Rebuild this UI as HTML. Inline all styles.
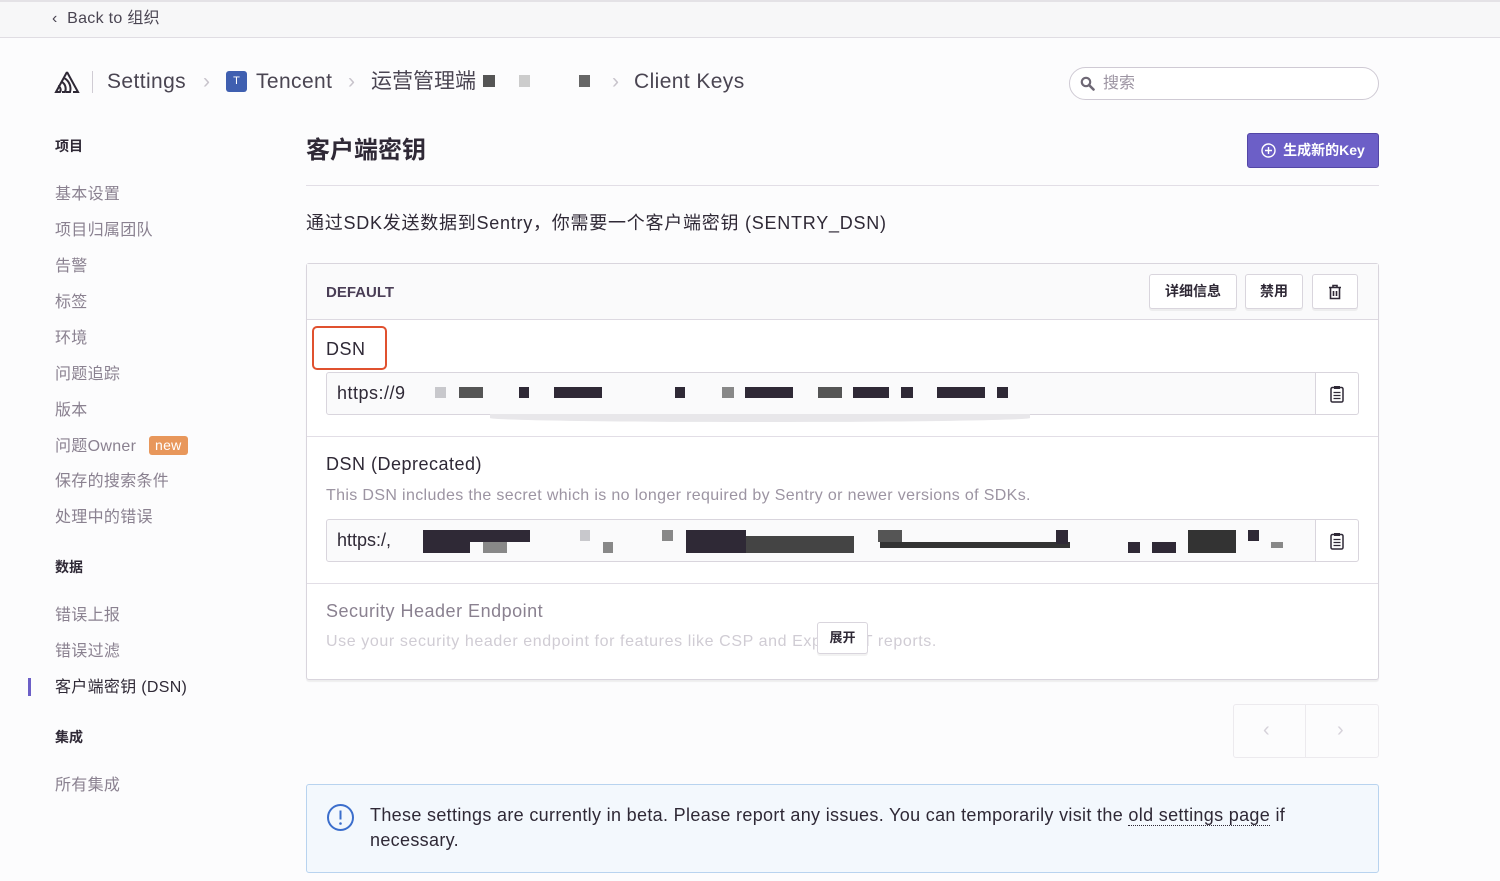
<!DOCTYPE html>
<html><head><meta charset="utf-8"><style>
*{box-sizing:border-box;margin:0;padding:0}
body{width:1500px;height:881px;overflow:hidden;background:#fcfcfd;font-family:"Liberation Sans","Noto Sans CJK SC",sans-serif;color:#2f2936;position:relative;line-height:1.2}
.a{position:absolute;white-space:nowrap}
.top{left:0;top:0;width:1500px;height:38px;background:#f7f7f8;border-top:2px solid #e4e2e6;border-bottom:1px solid #e0dde3}
.side{font-size:16px;color:#8a8190;left:55px;letter-spacing:.3px}
.sh{font-size:14px;font-weight:bold;color:#2f2936;left:55px}
.btn{background:#fff;border:1px solid #d9d5dd;border-radius:3px;box-shadow:0 2px 0 rgba(0,0,0,.05);font-size:14px;font-weight:bold;display:flex;align-items:center;justify-content:center;color:#2f2936}
.inp{background:#fafafb;border:1px solid #d9d5dd;border-radius:3px;height:43px}
.blk{position:absolute;background:#2f2936}
.g{background:#888}
.lg{background:#c8c8cc}
.bc{font-size:21px;color:#4a4552;line-height:26px;top:69px;letter-spacing:.4px}
.cp{width:44px;height:43px;border:1px solid #d9d5dd;background:#fff;border-radius:0 3px 3px 0;display:flex;align-items:center;justify-content:center}
</style></head><body>
<div class="a top"></div>
<div class="a" style="left:52px;top:9px;font-size:16px;color:#4a4552;letter-spacing:.3px">‹&nbsp; Back to 组织</div>

<svg class="a" style="left:54px;top:70px" width="26" height="24" viewBox="0 0 26 24"><path d="M13 2 L24 22 H19 M13 2 L2 22 H6 A4 4 0 0 0 4 16 M10 8 A12 12 0 0 1 16 22 H12 M8 12 A8 8 0 0 1 11 22 H8" fill="none" stroke="#2f2936" stroke-width="2"/></svg>
<div class="a" style="left:92px;top:71px;width:1px;height:22px;background:#d0ccd4"></div>
<div class="a bc" style="left:107px">Settings</div>
<div class="a bc" style="left:203px;color:#c8c4cc">›</div>
<div class="a" style="left:226px;top:71px;width:21px;height:21px;background:#3f5fb0;border-radius:3px;color:#fff;font-size:11px;text-align:center;line-height:21px">T</div>
<div class="a bc" style="left:256px">Tencent</div>
<div class="a bc" style="left:348px;color:#c8c4cc">›</div>
<div class="a bc" style="left:371px;letter-spacing:0">运营管理端</div>
<div class="a" style="left:483px;top:75px;width:12px;height:12px;background:#555"></div>
<div class="a" style="left:519px;top:75px;width:11px;height:12px;background:#ccc"></div>
<div class="a" style="left:579px;top:75px;width:11px;height:12px;background:#666"></div>
<div class="a bc" style="left:612px;color:#c8c4cc">›</div>
<div class="a bc" style="left:634px">Client Keys</div>

<div class="a" style="left:1069px;top:67px;width:310px;height:33px;border:1px solid #cfcad4;border-radius:17px;background:#fff"></div>
<svg class="a" style="left:1080px;top:76px" width="15" height="15" viewBox="0 0 15 15"><circle cx="6" cy="6" r="4.2" fill="none" stroke="#6e6875" stroke-width="2.2"/><path d="M9 9 L13.5 13.5" stroke="#6e6875" stroke-width="2.6" stroke-linecap="round"/></svg>
<div class="a" style="left:1103px;top:74px;font-size:16px;color:#9c94a2">搜索</div>

<div class="a sh" style="top:138px">项目</div>
<div class="a side" style="top:185px">基本设置</div>
<div class="a side" style="top:221px">项目归属团队</div>
<div class="a side" style="top:257px">告警</div>
<div class="a side" style="top:293px">标签</div>
<div class="a side" style="top:329px">环境</div>
<div class="a side" style="top:365px">问题追踪</div>
<div class="a side" style="top:401px">版本</div>
<div class="a side" style="top:436px">问题Owner <span style="display:inline-block;background:#e8975b;color:#fff;font-size:14px;padding:1px 6px;border-radius:3px;margin-left:8px;vertical-align:1px">new</span></div>
<div class="a side" style="top:472px">保存的搜索条件</div>
<div class="a side" style="top:508px">处理中的错误</div>
<div class="a sh" style="top:559px">数据</div>
<div class="a side" style="top:606px">错误上报</div>
<div class="a side" style="top:642px">错误过滤</div>
<div class="a" style="left:28px;top:678px;width:3px;height:18px;background:#6c5fc7"></div>
<div class="a side" style="top:678px;color:#2f2936">客户端密钥 (DSN)</div>
<div class="a sh" style="top:729px">集成</div>
<div class="a side" style="top:776px">所有集成</div>

<div class="a" style="left:306px;top:136px;font-size:24px;font-weight:bold;color:#2f2936;line-height:30px">客户端密钥</div>
<div class="a" style="left:1247px;top:133px;width:132px;height:35px;background:#6c5fc7;border:1px solid #5346a6;border-radius:3px;color:#fff;font-size:14px;font-weight:bold;display:flex;align-items:center;justify-content:center;gap:7px"><svg width="15" height="15" viewBox="0 0 15 15"><circle cx="7.5" cy="7.5" r="6.5" fill="none" stroke="#fff" stroke-width="1.4"/><path d="M7.5 4v7M4 7.5h7" stroke="#fff" stroke-width="1.4"/></svg>生成新的Key</div>
<div class="a" style="left:306px;top:185px;width:1073px;height:1px;background:#e2dee6"></div>
<div class="a" style="left:306px;top:213px;font-size:18px;color:#2f2936;letter-spacing:.75px">通过SDK发送数据到Sentry，你需要一个客户端密钥 (SENTRY_DSN)</div>

<div class="a" style="left:306px;top:263px;width:1073px;height:417px;background:#fff;border:1px solid #d9d5dd;border-radius:3px;box-shadow:0 2px 1px rgba(0,0,0,.06)"></div>
<div class="a" style="left:307px;top:264px;width:1071px;height:56px;background:#fafafb;border-bottom:1px solid #ddd9e1"></div>
<div class="a" style="left:326px;top:284px;font-size:15px;font-weight:bold;color:#4a3e56">DEFAULT</div>
<div class="a btn" style="left:1149px;top:274px;width:88px;height:35px">详细信息</div>
<div class="a btn" style="left:1245px;top:274px;width:58px;height:35px">禁用</div>
<div class="a btn" style="left:1312px;top:274px;width:46px;height:35px"><svg width="14" height="16" viewBox="0 0 14 16"><path d="M1 3.5h12M5 3.5V1.5h4v2M2.5 3.5v11h9v-11M5.5 7v5M8.5 7v5" fill="none" stroke="#2f2936" stroke-width="1.6"/></svg></div>

<div class="a" style="left:312px;top:326px;width:75px;height:44px;border:2px solid #e0512f;border-radius:5px"></div>
<div class="a" style="left:326px;top:339px;font-size:18px;letter-spacing:.5px">DSN</div>
<div class="a inp" style="left:326px;top:372px;width:990px;border-radius:3px 0 0 3px"></div>
<div class="a" style="left:337px;top:383px;font-size:18px;letter-spacing:.5px">https://9</div>
<div class="blk lg" style="left:435px;top:387px;width:11px;height:11px"></div>
<div class="blk" style="left:459px;top:387px;width:24px;height:11px;background:#555"></div>
<div class="blk" style="left:519px;top:387px;width:10px;height:11px"></div>
<div class="blk" style="left:554px;top:387px;width:48px;height:11px"></div>
<div class="blk" style="left:675px;top:387px;width:10px;height:11px"></div>
<div class="blk g" style="left:722px;top:387px;width:12px;height:11px"></div>
<div class="blk" style="left:745px;top:387px;width:48px;height:11px"></div>
<div class="blk" style="left:818px;top:387px;width:24px;height:11px;background:#555"></div>
<div class="blk" style="left:853px;top:387px;width:36px;height:11px"></div>
<div class="blk" style="left:901px;top:387px;width:12px;height:11px"></div>
<div class="blk" style="left:937px;top:387px;width:48px;height:11px"></div>
<div class="blk" style="left:997px;top:387px;width:11px;height:11px"></div>
<div class="a cp" style="left:1315px;top:372px"><svg width="14" height="18" viewBox="0 0 14 18"><rect x="1" y="2.5" width="12" height="14.5" rx="1.5" fill="none" stroke="#2f2936" stroke-width="1.5"/><rect x="4" y="1" width="6" height="3" fill="#2f2936"/><path d="M3.5 7.5h7M3.5 10.5h7M3.5 13.5h7" stroke="#2f2936" stroke-width="1.3"/></svg></div>
<div class="a" style="left:490px;top:414px;width:540px;height:8px;background:#e8e7ea;border-radius:0 0 50% 50%"></div>

<div class="a" style="left:307px;top:436px;width:1071px;height:1px;background:#e2dee6"></div>
<div class="a" style="left:326px;top:454px;font-size:18px;letter-spacing:.5px">DSN (Deprecated)</div>
<div class="a" style="left:326px;top:486px;font-size:16px;color:#9c94a2;letter-spacing:.35px">This DSN includes the secret which is no longer required by Sentry or newer versions of SDKs.</div>
<div class="a inp" style="left:326px;top:519px;width:990px;border-radius:3px 0 0 3px"></div>
<div class="a" style="left:337px;top:530px;font-size:18px">https:/,</div>
<div class="blk" style="left:423px;top:530px;width:47px;height:23px"></div>
<div class="blk" style="left:470px;top:530px;width:60px;height:12px"></div>
<div class="blk g" style="left:483px;top:542px;width:24px;height:11px"></div>
<div class="blk lg" style="left:580px;top:530px;width:10px;height:11px"></div>
<div class="blk g" style="left:603px;top:542px;width:10px;height:11px"></div>
<div class="blk g" style="left:662px;top:530px;width:11px;height:11px"></div>
<div class="blk" style="left:686px;top:530px;width:60px;height:23px"></div>
<div class="blk" style="left:746px;top:536px;width:108px;height:17px;background:#444"></div>
<div class="blk" style="left:878px;top:530px;width:24px;height:12px;background:#555"></div>
<div class="blk" style="left:880px;top:542px;width:190px;height:6px;background:#333"></div>
<div class="blk" style="left:1056px;top:530px;width:12px;height:14px"></div>
<div class="blk" style="left:1128px;top:542px;width:12px;height:11px"></div>
<div class="blk" style="left:1152px;top:542px;width:24px;height:11px"></div>
<div class="blk" style="left:1188px;top:530px;width:48px;height:23px;background:#333"></div>
<div class="blk" style="left:1248px;top:530px;width:11px;height:11px"></div>
<div class="blk g" style="left:1271px;top:542px;width:12px;height:6px"></div>
<div class="a cp" style="left:1315px;top:519px"><svg width="14" height="18" viewBox="0 0 14 18"><rect x="1" y="2.5" width="12" height="14.5" rx="1.5" fill="none" stroke="#2f2936" stroke-width="1.5"/><rect x="4" y="1" width="6" height="3" fill="#2f2936"/><path d="M3.5 7.5h7M3.5 10.5h7M3.5 13.5h7" stroke="#2f2936" stroke-width="1.3"/></svg></div>

<div class="a" style="left:307px;top:583px;width:1071px;height:1px;background:#e2dee6"></div>
<div class="a" style="left:326px;top:601px;font-size:18px;color:#8a8190;letter-spacing:.5px">Security Header Endpoint</div>
<div class="a" style="left:326px;top:632px;font-size:16px;color:#d0ccd4;letter-spacing:.6px">Use your security header endpoint for features like CSP and Expect-CT reports.</div>
<div class="a btn" style="left:817px;top:622px;width:51px;height:32px;font-size:13px">展开</div>

<div class="a" style="left:1233px;top:704px;width:146px;height:54px;border:1px solid #eceaee;border-radius:3px;background:#fcfcfd"></div>
<div class="a" style="left:1305px;top:704px;width:1px;height:54px;background:#eceaee"></div>
<div class="a" style="left:1263px;top:718px;font-size:20px;color:#d6d2da">‹</div>
<div class="a" style="left:1337px;top:718px;font-size:20px;color:#d6d2da">›</div>

<div class="a" style="left:306px;top:784px;width:1073px;height:89px;background:#f3f8fd;border:1px solid #b8d3ef;border-radius:3px"></div>
<svg class="a" style="left:326px;top:803px" width="29" height="29" viewBox="0 0 29 29"><circle cx="14.5" cy="14.5" r="12.5" fill="none" stroke="#3b6ecc" stroke-width="2"/><path d="M14.5 7.5v9" stroke="#3b6ecc" stroke-width="2"/><circle cx="14.5" cy="20.5" r="1.3" fill="#3b6ecc"/></svg>
<div class="a" style="left:370px;top:803px;width:960px;font-size:18px;line-height:25px;color:#2f2936;letter-spacing:.33px;white-space:normal">These settings are currently in beta. Please report any issues. You can temporarily visit the <span style="border-bottom:1px dotted #2f2936">old settings page</span> if necessary.</div>
</body></html>
